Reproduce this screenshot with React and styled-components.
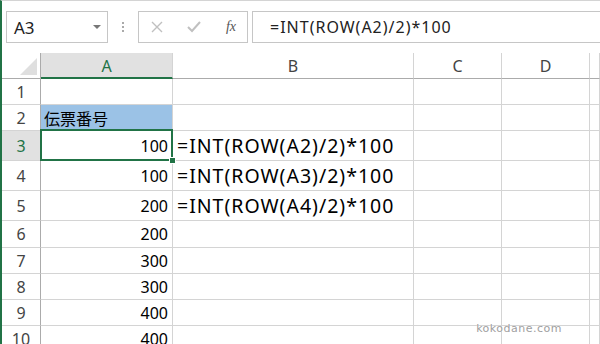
import React from "react";
import styled, { createGlobalStyle } from "styled-components";

const Global = createGlobalStyle`
  html, body { margin: 0; padding: 0; background: #fff; }
  body { font-family: "Noto Sans", "Noto Sans CJK JP", sans-serif; }
`;

const Page = styled.div`
  width: 600px;
  height: 344px;
  box-sizing: border-box;
  border-left: 2px solid #217346;
  border-top: 1px solid #d4d4d4;
  overflow: hidden;
  background: #fff;
`;

const Toolbar = styled.div`
  display: flex;
  align-items: stretch;
  height: 32px;
  padding: 10px 0 0 4px;
  margin-bottom: 10px;
`;

const Box = styled.div`
  box-sizing: border-box;
  border: 1px solid #c6c6c6;
  background: #fff;
  display: flex;
  align-items: center;
`;

const NameBox = styled(Box)`
  width: 102px;
  padding: 0 6px 0 7px;
  justify-content: space-between;
  font-size: 17px;
  color: #222;
`;

const Caret = styled.span`
  width: 0;
  height: 0;
  border-left: 4px solid transparent;
  border-right: 4px solid transparent;
  border-top: 4px solid #777;
`;

const Dots = styled.div`
  width: 30px;
  display: flex;
  flex-direction: column;
  align-items: center;
  justify-content: center;
  gap: 2px;
  span {
    width: 2px;
    height: 2px;
    background: #aaa;
  }
`;

const FuncBox = styled(Box)`
  width: 110px;
  justify-content: space-between;
  padding: 0 11px 0 12px;
  color: #c0c0c0;
`;

const Fx = styled.span`
  font-family: "Liberation Serif", serif;
  font-style: italic;
  font-size: 14px;
  color: #555;
`;

const FormulaBox = styled(Box)`
  flex: 1;
  margin-left: 4px;
  border-right: none;
  padding-left: 17px;
  font-size: 16px;
  letter-spacing: 1px;
  color: #222;
`;

const Grid = styled.div`
  display: grid;
  grid-template-columns: 39px 132px 241px 88px 88px 1fr;
  grid-template-rows: 26px 26px 26px 30px 30px 30px 27px 26px 26px 26px 26px;
`;

const Cell = styled.div`
  box-sizing: border-box;
  border-right: 1px solid #d4d4d4;
  border-bottom: 1px solid #d4d4d4;
  display: flex;
  align-items: center;
  position: relative;
  white-space: nowrap;
  font-size: 16px;
  color: #000;
  background: ${(p) => (p.$fill ? "#9bc2e6" : "#fff")};
  justify-content: ${(p) => (p.$right ? "flex-end" : "flex-start")};
  padding: ${(p) => (p.$right ? "0 4px 0 0" : "0 0 0 3px")};
`;

const BigCell = styled(Cell)`
  font-size: 19.5px;
  letter-spacing: 1px;
  overflow: visible;
  padding-left: 4px;
`;

const Corner = styled.div`
  box-sizing: border-box;
  border-right: 1px solid #ababab;
  border-bottom: 1px solid #ababab;
  position: relative;
  &::after {
    content: "";
    position: absolute;
    right: 3px;
    bottom: 3px;
    width: 0;
    height: 0;
    border-left: 17px solid transparent;
    border-bottom: 17px solid #dfdfdf;
  }
`;

const ColHead = styled.div`
  box-sizing: border-box;
  border-right: 1px solid #d4d4d4;
  border-bottom: ${(p) => (p.$active ? "2px solid #217346" : "1px solid #ababab")};
  background: ${(p) => (p.$active ? "#e1e1e1" : "#fff")};
  color: ${(p) => (p.$active ? "#217346" : "#444")};
  display: flex;
  align-items: center;
  justify-content: center;
  font-size: 16px;
  padding-top: ${(p) => (p.$active ? "1px" : "0")};
`;

const RowHead = styled.div`
  box-sizing: border-box;
  border-right: 1px solid #ababab;
  border-bottom: 1px solid #d4d4d4;
  background: ${(p) => (p.$active ? "#e1e1e1" : "#fff")};
  color: ${(p) => (p.$active ? "#217346" : "#444")};
  display: flex;
  align-items: center;
  justify-content: center;
  font-size: 16px;
`;

const Selection = styled.div`
  position: absolute;
  top: -2px;
  left: -1px;
  right: -1px;
  bottom: -1px;
  border: 2px solid #217346;
  pointer-events: none;
  z-index: 2;
`;

const Handle = styled.div`
  position: absolute;
  right: -5px;
  bottom: -5px;
  width: 5px;
  height: 5px;
  background: #217346;
  border: 1px solid #fff;
`;

const Watermark = styled.div`
  position: absolute;
  right: 38px;
  bottom: 17px;
  font-family: "DejaVu Sans", sans-serif;
  font-size: 11px;
  color: #a0a0a0;
  letter-spacing: 0.5px;
  text-shadow: 0 0 1px #fff;
  z-index: 3;
`;

const Wrap = styled.div`
  position: relative;
`;

const rows = [
  { n: 1, a: "", b: "" },
  { n: 2, a: "伝票番号", b: "", fill: true },
  { n: 3, a: "100", b: "=INT(ROW(A2)/2)*100", sel: true },
  { n: 4, a: "100", b: "=INT(ROW(A3)/2)*100" },
  { n: 5, a: "200", b: "=INT(ROW(A4)/2)*100" },
  { n: 6, a: "200", b: "" },
  { n: 7, a: "300", b: "" },
  { n: 8, a: "300", b: "" },
  { n: 9, a: "400", b: "" },
  { n: 10, a: "400", b: "" },
];

export default function App() {
  return (
    <Page>
      <Global />
      <Toolbar>
        <NameBox>
          <span>A3</span>
          <Caret />
        </NameBox>
        <Dots>
          <span />
          <span />
          <span />
        </Dots>
        <FuncBox>
          <svg width="12" height="12" viewBox="0 0 12 12">
            <path d="M1 1L11 11M11 1L1 11" stroke="#c0c0c0" strokeWidth="1.4" />
          </svg>
          <svg width="14" height="12" viewBox="0 0 14 12">
            <path d="M1 6L5 10L13 1" stroke="#c0c0c0" strokeWidth="2" fill="none" />
          </svg>
          <Fx>fx</Fx>
        </FuncBox>
        <FormulaBox>=INT(ROW(A2)/2)*100</FormulaBox>
      </Toolbar>
      <Wrap>
        <Grid>
          <Corner />
          <ColHead $active>A</ColHead>
          <ColHead>B</ColHead>
          <ColHead>C</ColHead>
          <ColHead>D</ColHead>
          <ColHead />
          {rows.map((r) => (
            <React.Fragment key={r.n}>
              <RowHead $active={r.sel}>{r.n}</RowHead>
              <Cell $right={r.n > 2} $fill={r.fill}>
                {r.a}
                {r.sel && (
                  <Selection>
                    <Handle />
                  </Selection>
                )}
              </Cell>
              <BigCell>{r.b}</BigCell>
              <Cell />
              <Cell />
              <Cell />
            </React.Fragment>
          ))}
        </Grid>
        <Watermark>kokodane.com</Watermark>
      </Wrap>
    </Page>
  );
}
